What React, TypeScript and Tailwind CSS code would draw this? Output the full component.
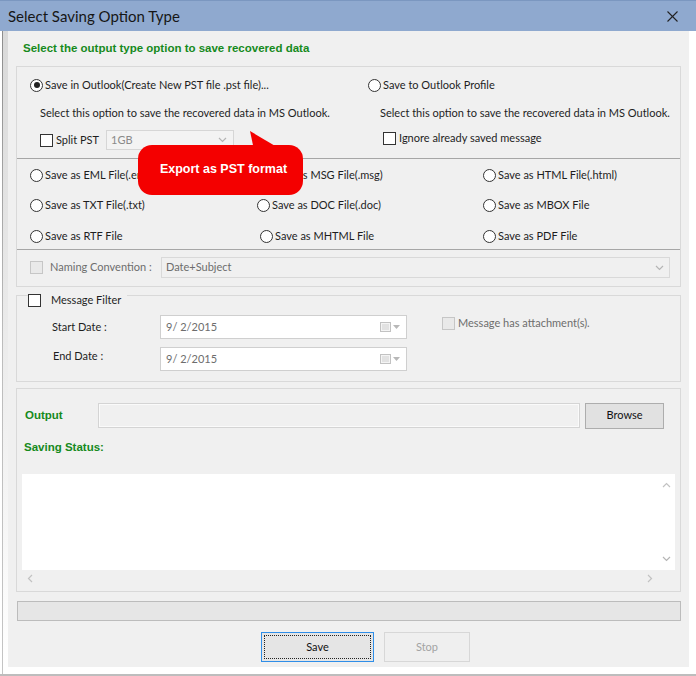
import { ReactNode } from "react"

const ui = "font-['Lato',sans-serif] text-[11px] text-[#1e1e1e]"
const green = "font-['Liberation_Sans',sans-serif] text-[11.5px] font-bold text-[#168a1c]"

function Radio({ label, checked = false, className = "" }: { label: string; checked?: boolean; className?: string }) {
  return (
    <div className={`flex items-center gap-[2px] h-5 ${className}`}>
      <span className="w-[13px] h-[13px] rounded-full border border-[#333] bg-white flex items-center justify-center shrink-0">
        {checked && <span className="w-[6px] h-[6px] rounded-full bg-[#222]" />}
      </span>
      <span className="whitespace-nowrap">{label}</span>
    </div>
  )
}

function Check({ label, disabled = false, className = "" }: { label?: string; disabled?: boolean; className?: string }) {
  return (
    <div className={`flex items-center gap-[3px] h-5 ${className}`}>
      <span
        className={`w-[13px] h-[13px] border shrink-0 ${
          disabled ? "border-[#c6c6c6] bg-[#e9e9e9]" : "border-[#333] bg-white"
        }`}
      />
      {label && <span className={`whitespace-nowrap ${disabled ? "text-[#6d6d6d]" : ""}`}>{label}</span>}
    </div>
  )
}

function Chevron({ className = "" }: { className?: string }) {
  return (
    <svg width="9" height="6" viewBox="0 0 9 6" className={className}>
      <polyline points="1,1 4.5,4.5 8,1" fill="none" stroke="#b5b5b5" strokeWidth="1.2" />
    </svg>
  )
}

function DateBox({ value }: { value: string }) {
  return (
    <div className="w-[247px] h-[24px] border border-[#cfcfcf] bg-white flex items-center pl-[5px] pr-[6px]">
      <span className="flex-1 text-[#6d6d6d]">{value}</span>
      <svg width="12" height="10" viewBox="0 0 12 10" className="mr-[1px]">
        <rect x="0.5" y="0.5" width="10" height="9" fill="#f4f4f4" stroke="#c2c2c2" />
        <line x1="2" y1="3" x2="9" y2="3" stroke="#d0d0d0" />
        <line x1="2" y1="5" x2="9" y2="5" stroke="#d0d0d0" />
        <line x1="2" y1="7" x2="9" y2="7" stroke="#d0d0d0" />
      </svg>
      <svg width="7" height="4" viewBox="0 0 7 4">
        <polygon points="0,0 7,0 3.5,4" fill="#b8b8b8" />
      </svg>
    </div>
  )
}

function Group({ children, className = "" }: { children: ReactNode; className?: string }) {
  return <div className={`border border-[#d9d9d9] ${className}`}>{children}</div>
}

export default function App() {
  return (
    <div className={`relative w-[696px] h-[676px] bg-white flex flex-col ${ui}`}>
      {/* title bar */}
      <div className="h-[31px] bg-[#8fa9cf] border-t border-[#7b97c0] flex items-center pl-[8px] pr-[18px]">
        <span className="flex-1 font-['Lato',sans-serif] text-[15px] text-[#161616]">Select Saving Option Type</span>
        <svg width="11" height="11" viewBox="0 0 11 11">
          <line x1="0.5" y1="0.5" x2="10.5" y2="10.5" stroke="#222" strokeWidth="1.1" />
          <line x1="10.5" y1="0.5" x2="0.5" y2="10.5" stroke="#222" strokeWidth="1.1" />
        </svg>
      </div>

      <div className="flex h-[636px]">
        <div className="w-[8px] flex">
          <div className="w-[2px]" />
          <div className="w-[1px] bg-gradient-to-b from-[#8d8d8d] via-[#bdbdbd] to-[#c4c4c4]" />
          <div className="flex-1 bg-gradient-to-b from-[#d9d9d9] to-white" />
        </div>

        <div className="w-[681px] bg-[#f0f0f0] flex flex-col px-[8px]">
          <div className="h-[35px] flex items-center pl-[7px]">
            <span className={green}>Select the output type option to save recovered data</span>
          </div>

          {/* output type options */}
          <Group className="h-[221px] flex flex-col">
            <div className="h-[91px] pt-[8px] pl-[13px] flex">
              <div className="w-[338px] flex flex-col">
                <Radio label="Save in Outlook(Create New PST file .pst file)..." checked />
                <div className="h-5 mt-[8px] pl-[10px] flex items-center whitespace-nowrap">
                  Select this option to save the recovered data in MS Outlook.
                </div>
                <div className="h-5 mt-[7px] pl-[10px] flex items-center gap-[7px]">
                  <Check label="Split PST" />
                  <div className="w-[128px] h-[20px] border border-[#d6d6d6] bg-[#f3f3f3] flex items-center pl-[4px] pr-[6px]">
                    <span className="flex-1 text-[#8a8a8a]">1GB</span>
                    <Chevron />
                  </div>
                </div>
              </div>
              <div className="flex flex-col">
                <Radio label="Save to Outlook Profile" />
                <div className="h-5 mt-[8px] pl-[12px] flex items-center whitespace-nowrap">
                  Select this option to save the recovered data in MS Outlook.
                </div>
                <Check label="Ignore already saved message" className="mt-[5px] pl-[15px]" />
              </div>
            </div>
            <div className="h-px bg-[#a6a6a6]" />

            <div className="h-[90px] pt-[6px] pl-[13px] grid grid-cols-[227px_226px_1fr] grid-rows-[20px_20px_20px] gap-y-[10px]">
              <Radio label="Save as EML File(.eml)" />
              <Radio label="Save as MSG File(.msg)" />
              <Radio label="Save as HTML File(.html)" />
              <Radio label="Save as TXT File(.txt)" />
              <Radio label="Save as DOC File(.doc)" />
              <Radio label="Save as MBOX File" />
              <Radio label="Save as RTF File" className="mt-px" />
              <Radio label="Save as MHTML File" className="mt-px ml-[3px]" />
              <Radio label="Save as PDF File" className="mt-px" />
            </div>
            <div className="h-px bg-[#a6a6a6]" />

            <div className="flex-1 pt-[7px] pl-[13px] pr-[10px] flex items-start">
              <Check disabled className="h-[21px] w-[20px]" />
              <span className="h-[21px] w-[111px] flex items-center text-[#6d6d6d]">Naming Convention :</span>
              <div className="flex-1 h-[21px] border border-[#d9d9d9] flex items-center pl-[4px] pr-[5px]">
                <span className="flex-1 text-[#6d6d6d]">Date+Subject</span>
                <Chevron />
              </div>
            </div>
          </Group>

          {/* message filter */}
          <Group className="relative mt-[8px] h-[87px] pt-[19px] pl-[35px] flex">
            <div className="absolute left-[11px] top-[-4px] h-[16px] pr-[6px] bg-[#f0f0f0] flex items-center gap-[10px]">
              <span className="w-[13px] h-[13px] border border-[#333] bg-white" />
              <span>Message Filter</span>
            </div>
            <div className="w-[108px] flex flex-col gap-[8px]">
              <span className="h-[24px] flex items-center">Start Date :</span>
              <span className="h-[24px] flex items-center pl-[1px] mt-[-3px]">End Date :</span>
            </div>
            <div className="flex flex-col gap-[8px]">
              <DateBox value="9/  2/2015" />
              <DateBox value="9/  2/2015" />
            </div>
            <Check label="Message has attachment(s)." disabled className="ml-[35px] h-[20px] mt-[-2px]" />
          </Group>

          {/* output and status */}
          <Group className="mt-[6px] h-[204px] flex flex-col px-[5px]">
            <div className="mt-[14px] h-[25px] flex items-center">
              <span className={`${green} w-[76px] pl-[3px]`}>Output</span>
              <div className="w-[482px] h-[25px] border border-[#d4d4d4] bg-[#f0f0f0] shadow-[inset_0_0_0_1px_#fafafa]" />
              <button className="ml-[5px] w-[79px] h-[26px] border border-[#adadad] bg-[#e1e1e1] text-[11px] text-[#111]">
                Browse
              </button>
            </div>
            <div className="mt-[12px] h-[16px] flex items-center">
              <span className={`${green} pl-[2px]`}>Saving Status:</span>
            </div>
            <div className="mt-[18px] h-[113px] grid grid-cols-[1fr_17px] grid-rows-[1fr_17px]">
              <div className="bg-white" />
              <div className="bg-white flex flex-col items-center justify-between py-[8px]">
                <svg width="9" height="6" viewBox="0 0 9 6">
                  <polyline points="1,5 4.5,1.5 8,5" fill="none" stroke="#c2c2c2" strokeWidth="1.2" />
                </svg>
                <Chevron />
              </div>
              <div className="flex items-center justify-between px-[5px]">
                <svg width="6" height="9" viewBox="0 0 6 9">
                  <polyline points="5,1 1.5,4.5 5,8" fill="none" stroke="#c2c2c2" strokeWidth="1.2" />
                </svg>
                <svg width="6" height="9" viewBox="0 0 6 9">
                  <polyline points="1,1 4.5,4.5 1,8" fill="none" stroke="#c2c2c2" strokeWidth="1.2" />
                </svg>
              </div>
              <div />
            </div>
          </Group>

          {/* progress */}
          <div className="mt-[9px] ml-[1px] h-[20px] border border-[#bcbcbc] bg-[#e6e6e6]" />

          <div className="mt-[11px] h-[30px] flex gap-[10px] pl-[245px]">
            <button className="w-[113px] h-[30px] border border-[#2f8ee8] bg-[#e5e5e5] p-[2px]">
              <span className="w-full h-full border border-dotted border-[#222] flex items-center justify-center text-[#111]">
                Save
              </span>
            </button>
            <button className="w-[86px] h-[30px] border border-[#d7d7d7] bg-[#efefef] text-[#a3a3a3]">Stop</button>
          </div>
        </div>

        <div className="w-[7px] bg-white" />
      </div>

      <div className="h-[9px] flex flex-col">
        <div className="flex-1 flex">
          <div className="w-[2px]" />
          <div className="w-[1px] bg-[#c4c4c4]" />
        </div>
        <div className="h-[2px] bg-[#bdbdbd]" />
      </div>

      {/* callout */}
      <svg width="40" height="22" viewBox="0 0 40 22" className="absolute left-[248px] top-[129px]">
        <polygon points="2,2 6,21 34,21" fill="#f40000" />
      </svg>
      <div className="absolute left-[138px] top-[145px] w-[165px] h-[50px] rounded-[14px] bg-[#f40000] flex items-start justify-center pt-[15px] pl-[6px]">
        <span className="font-['Liberation_Sans',sans-serif] text-[12.5px] font-bold text-white">Export as PST format</span>
      </div>
    </div>
  )
}
